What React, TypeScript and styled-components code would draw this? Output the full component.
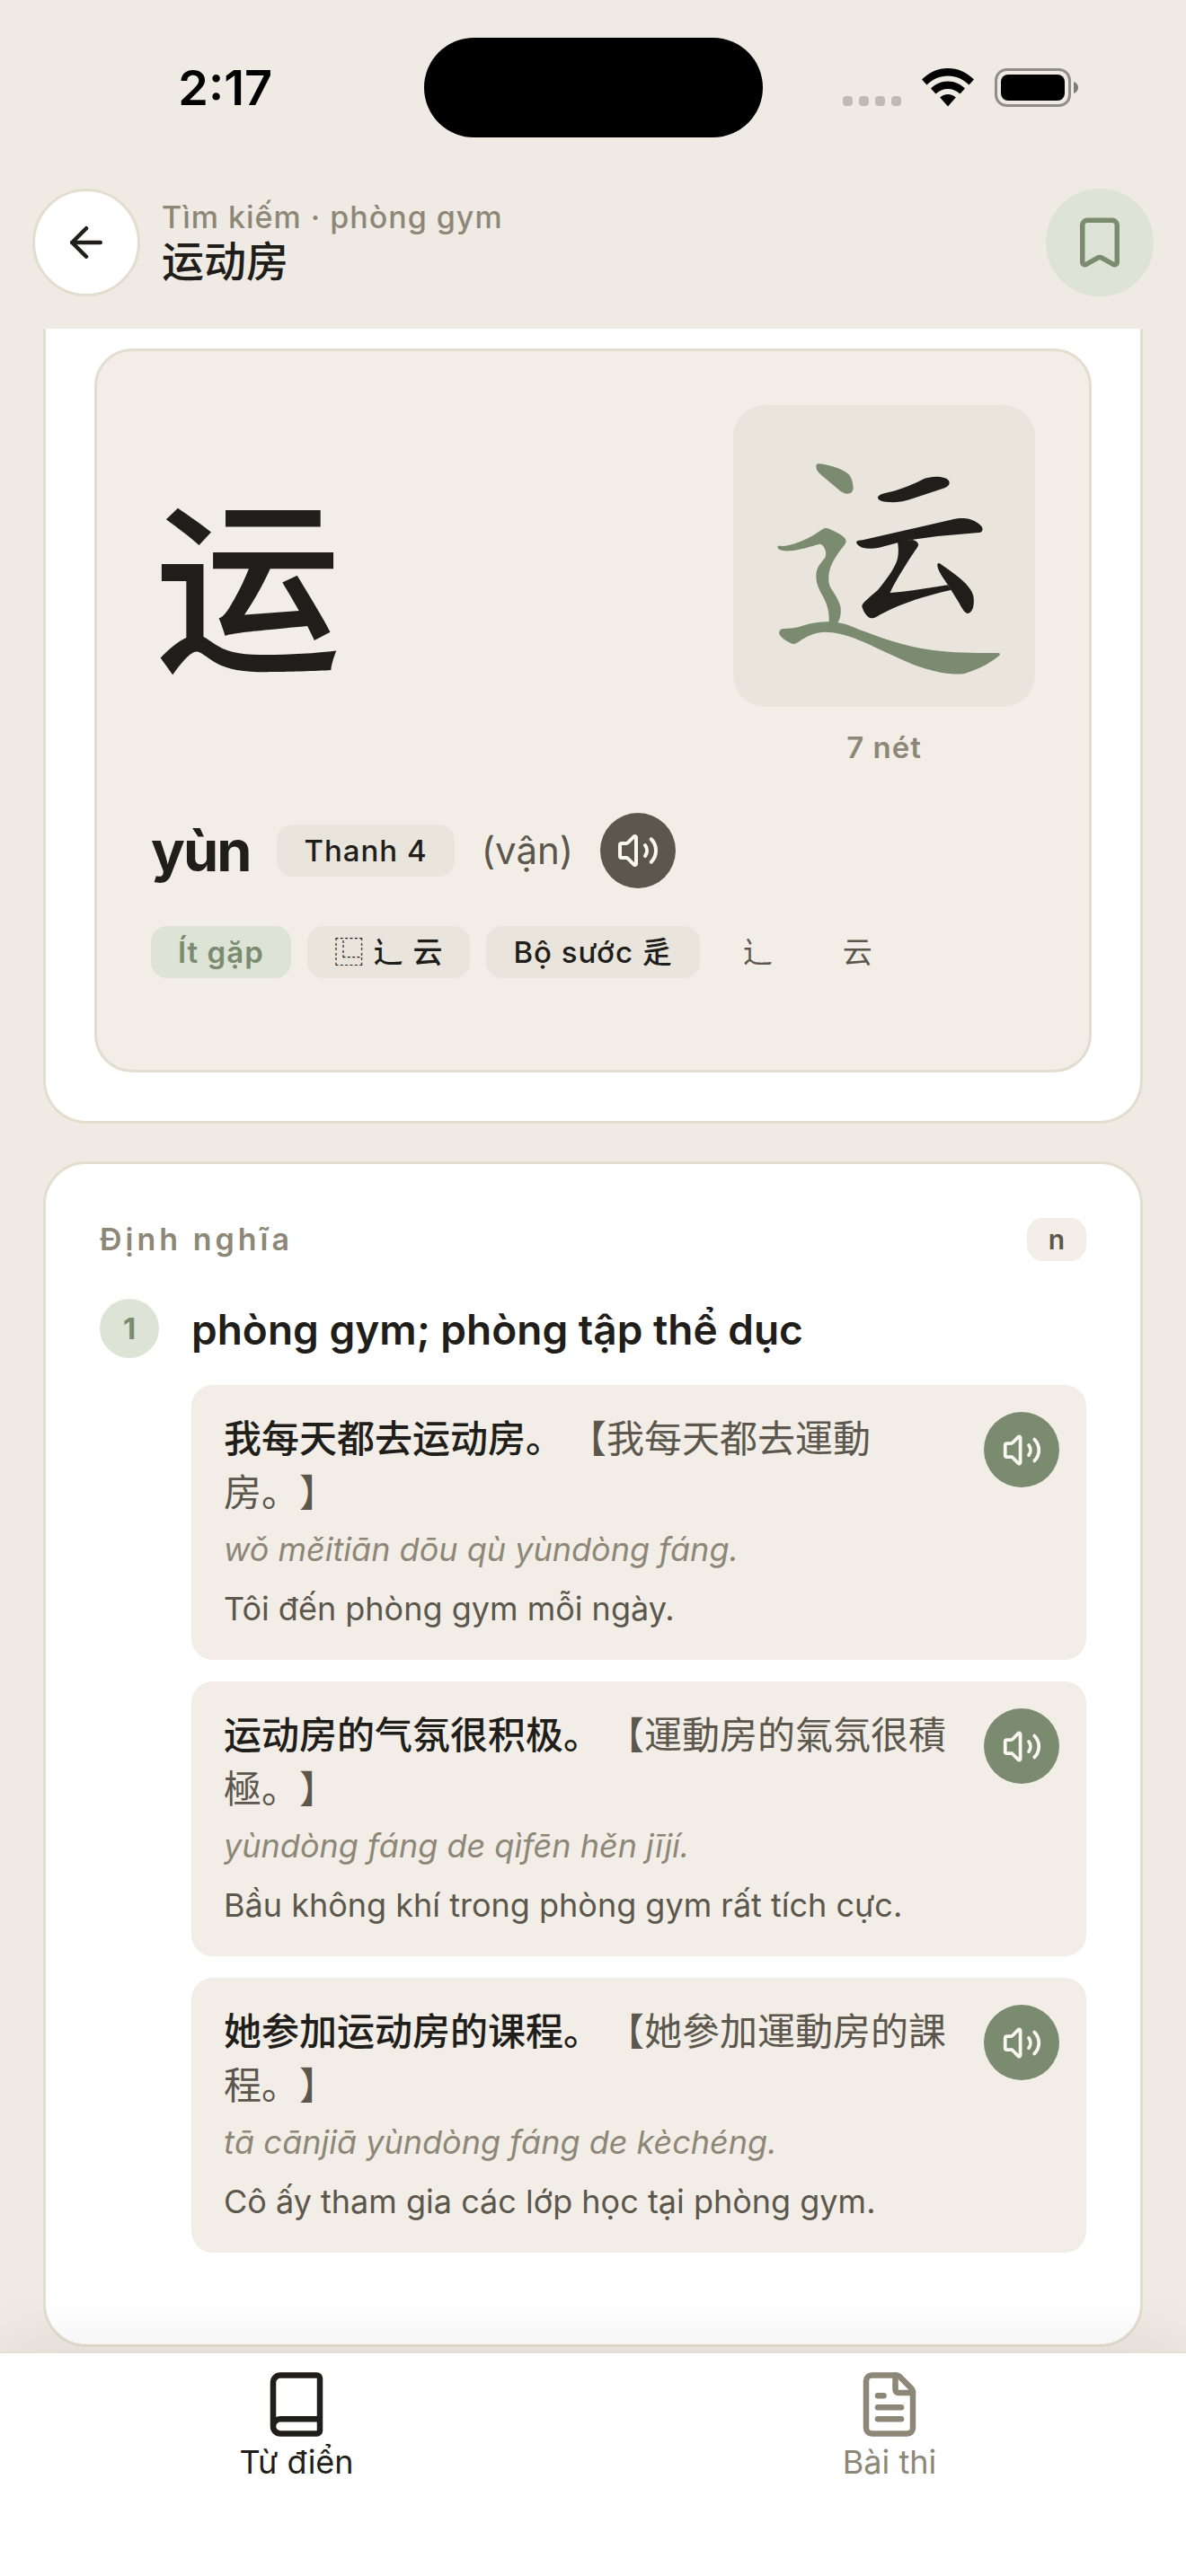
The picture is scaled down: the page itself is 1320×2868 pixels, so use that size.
import React from "react";
import styled, { createGlobalStyle } from "styled-components";
import { ArrowLeft, Book, FileText, Volume2 } from "lucide-react";

const color = {
  page: "#EFEAE3",
  surface: "#FFFFFF",
  soft: "#F2EDE6",
  chip: "#E9E4DC",
  line: "#E3DDD0",
  ink: "#1F1E1A",
  body: "#5B574D",
  muted: "#8D8778",
  sage: "#7B8B70",
  sageSoft: "#DDE3D5",
};

const GlobalStyle = createGlobalStyle`
  *, *::before, *::after { box-sizing: border-box; }
  body {
    margin: 0;
    background: ${color.page};
    color: ${color.ink};
    font-family: Inter, "Noto Sans CJK SC", sans-serif;
    text-spacing-trim: space-all;
  }
  h1, h2, h3, p, ol, ul { margin: 0; padding: 0; }
  ol, ul { list-style: none; }
`;

const Screen = styled.div`
  display: flex;
  flex-direction: column;
  min-height: 100vh;
`;

/* ---------- status bar ---------- */

const StatusBar = styled.div`
  display: grid;
  grid-template-columns: 1fr 377px 1fr;
  align-items: center;
  padding: 42px 0;
`;

const Clock = styled.time`
  padding-left: 30px;
  text-align: center;
  font-size: 54px;
  font-weight: 600;
  line-height: 60px;
  color: #000;
`;

const Island = styled.div`
  height: 111px;
  border-radius: 56px;
  background: #000;
`;

const StatusIcons = styled.div`
  display: flex;
  align-items: flex-end;
  justify-content: center;
  gap: 23px;
  padding-right: 30px;
`;

const Dots = styled.div`
  display: flex;
  gap: 7px;
  padding-bottom: 1px;
`;

const Dot = styled.span`
  width: 11px;
  height: 11px;
  border-radius: 4px;
  background: #bfbbb4;
`;

/* ---------- header ---------- */

const Header = styled.header`
  display: flex;
  align-items: center;
  gap: 24px;
  padding: 15px 36px 36px;
`;

const CircleButton = styled.button<{ $tone: "plain" | "sage" }>`
  display: grid;
  place-items: center;
  flex: none;
  width: 120px;
  height: 120px;
  padding: 0;
  border: 3px solid ${(p) => (p.$tone === "sage" ? color.sageSoft : color.line)};
  border-radius: 50%;
  background: ${(p) => (p.$tone === "sage" ? color.sageSoft : color.surface)};
  color: ${(p) => (p.$tone === "sage" ? color.sage : color.ink)};
`;

const Titles = styled.div`
  flex: 1;
  min-width: 0;
`;

const Crumb = styled.p`
  font-size: 34px;
  font-weight: 500;
  line-height: 42px;
  letter-spacing: 1px;
  color: ${color.muted};
`;

const Title = styled.h1`
  font-size: 47px;
  font-weight: 500;
  line-height: 56px;
`;

/* ---------- cards ---------- */

const Content = styled.main`
  display: flex;
  flex: 1;
  flex-direction: column;
  gap: 42px;
  padding: 0 48px 6px;
`;

const WordCard = styled.section`
  padding: 22px 54px 54px;
  border: 3px solid ${color.line};
  border-top: 0;
  border-radius: 0 0 48px 48px;
  background: ${color.surface};
`;

const CharacterPanel = styled.div`
  display: flex;
  flex-direction: column;
  padding: 60px 60px 102px;
  border: 3px solid ${color.line};
  border-radius: 42px;
  background: ${color.soft};
`;

const GlyphRow = styled.div`
  display: flex;
  align-items: center;
  justify-content: space-between;
`;

const Glyph = styled.h2`
  min-width: 216px;
  padding-top: 8px;
  font-size: 208px;
  font-weight: 500;
  line-height: 260px;
  text-align: center;
`;

const StrokeFigure = styled.figure`
  display: flex;
  flex-direction: column;
  align-items: center;
  gap: 24px;
  margin: 0;
`;

const StrokeBox = styled.div`
  width: 336px;
  height: 336px;
  border-radius: 36px;
  background: ${color.chip};
`;

const StrokeCount = styled.figcaption`
  font-size: 33px;
  font-weight: 600;
  line-height: 42px;
  letter-spacing: 1px;
  color: ${color.muted};
`;

const ReadingRow = styled.div`
  display: flex;
  align-items: center;
  gap: 30px;
  margin-top: 52px;
`;

const Pinyin = styled.strong`
  font-size: 63px;
  font-weight: 700;
  line-height: 72px;
  letter-spacing: -2px;
`;

const Reading = styled.span`
  font-size: 42px;
  line-height: 48px;
  color: ${color.body};
`;

const SoundButton = styled.button<{ $tone: "dark" | "sage" }>`
  display: grid;
  place-items: center;
  flex: none;
  width: 84px;
  height: 84px;
  padding: 0;
  border: 0;
  border-radius: 50%;
  background: ${(p) => (p.$tone === "dark" ? color.body : color.sage)};
  color: #faf7f2;
`;

const ChipRow = styled.ul`
  display: flex;
  flex-wrap: wrap;
  gap: 18px;
  margin-top: 42px;
`;

const Chip = styled.li<{ $tone?: "sage" | "clear" }>`
  padding: 8px 30px;
  border-radius: 18px;
  background: ${(p) =>
    p.$tone === "sage" ? color.sageSoft : p.$tone === "clear" ? "transparent" : color.chip};
  color: ${(p) =>
    p.$tone === "sage" ? color.sage : p.$tone === "clear" ? color.body : color.ink};
  font-size: 33px;
  font-weight: ${(p) => (p.$tone === "sage" ? 600 : p.$tone === "clear" ? 400 : 500)};
  line-height: 42px;
  letter-spacing: ${(p) => (p.$tone === "clear" ? "0" : "1px")};
`;

const ToneChip = styled(Chip).attrs({ as: "span" })``;

/* ---------- definitions ---------- */

const DefinitionCard = styled.section`
  padding: 60px 60px 102px;
  border: 3px solid ${color.line};
  border-radius: 48px;
  background: ${color.surface};
`;

const CardHead = styled.div`
  display: flex;
  align-items: center;
  justify-content: space-between;
`;

const CardLabel = styled.h2`
  font-size: 34px;
  font-weight: 600;
  line-height: 48px;
  letter-spacing: 4px;
  color: ${color.muted};
`;

const PartOfSpeech = styled.span`
  padding: 0 24px;
  border-radius: 18px;
  background: ${color.soft};
  color: ${color.body};
  font-size: 30px;
  font-weight: 600;
  line-height: 48px;
`;

const Sense = styled.li`
  display: grid;
  grid-template-columns: 66px minmax(0, 1fr);
  column-gap: 36px;
  margin-top: 42px;
`;

const SenseNumber = styled.span`
  width: 66px;
  height: 66px;
  border-radius: 50%;
  background: ${color.sageSoft};
  color: ${color.sage};
  font-size: 33px;
  font-weight: 700;
  line-height: 66px;
  text-align: center;
`;

const Meaning = styled.h3`
  padding-top: 2px;
  font-size: 46px;
  font-weight: 600;
  line-height: 64px;
`;

const Examples = styled.ul`
  display: flex;
  flex-direction: column;
  grid-column: 2;
  gap: 24px;
  margin-top: 30px;
`;

const Example = styled.li`
  display: flex;
  align-items: flex-start;
  gap: 30px;
  padding: 30px 30px 30px 36px;
  border-radius: 24px;
  background: ${color.soft};
`;

const ExampleText = styled.div`
  flex: 1;
  min-width: 0;
`;

const Sentence = styled.p`
  font-size: 42px;
  font-weight: 500;
  line-height: 60px;
`;

const Traditional = styled.span`
  margin-left: 6px;
  font-weight: 400;
  color: ${color.body};
`;

const Romanized = styled.p`
  margin-top: 6px;
  font-size: 36px;
  font-style: italic;
  line-height: 54px;
  color: ${color.muted};
`;

const Translation = styled.p`
  margin-top: 12px;
  font-size: 36px;
  line-height: 54px;
  color: ${color.body};
`;

/* ---------- tab bar ---------- */

const TabBar = styled.nav`
  z-index: 1;
  display: grid;
  grid-template-columns: 1fr 1fr;
  padding: 18px 0 102px;
  border-top: 1px solid ${color.line};
  background: ${color.surface};
  box-shadow: 0 -12px 60px rgba(31, 30, 26, 0.07);
`;

const Tab = styled.a<{ $active?: boolean }>`
  display: flex;
  flex-direction: column;
  align-items: center;
  color: ${(p) => (p.$active ? color.ink : color.muted)};
  font-size: 36px;
  line-height: 50px;
  text-decoration: none;
`;

/* ---------- drawings ---------- */

const WifiIcon = () => (
  <svg width="58" height="43" viewBox="0 0 58 43" fill="#000" aria-hidden="true">
    <path d="M29 0C18 0 8 4.500 0 12.500L5.500 18.500C12 12 20 8.500 29 8.500S46 12 52.500 18.500L58 12.500C50 4.500 40 0 29 0Z" />
    <path d="M29 14.500C21.500 14.500 15 17.500 10 22.500L15.500 28.500C19 25 24 23 29 23S39 25 42.500 28.500L48 22.500C43 17.500 36.500 14.500 29 14.500Z" />
    <path d="M29 29C25.500 29 22.500 30.300 20.200 32.600L29 42.500L37.800 32.600C35.500 30.300 32.500 29 29 29Z" />
  </svg>
);

const BatteryIcon = () => (
  <svg width="94" height="43" viewBox="0 0 94 43" aria-hidden="true">
    <rect x="1.500" y="1.500" width="82" height="40" rx="12" fill="none" stroke="#918E89" strokeWidth="3" />
    <rect x="7" y="7" width="71" height="29" rx="8" fill="#000" />
    <path d="M88 15C91 16 93 18.500 93 21.500S91 27 88 28Z" fill="#7E7B76" />
  </svg>
);

const BookmarkIcon = () => (
  <svg
    width="66"
    height="66"
    viewBox="0 0 24 24"
    fill="none"
    stroke="currentColor"
    strokeWidth="2"
    strokeLinecap="round"
    strokeLinejoin="round"
    aria-hidden="true"
  >
    <path d="M17 3a2 2 0 0 1 2 2v15a1 1 0 0 1-1.496.868l-4.512-2.578a2 2 0 0 0-1.984 0l-4.512 2.578A1 1 0 0 1 5 20V5a2 2 0 0 1 2-2z" />
  </svg>
);

const baseStrokes = [
  "M531 371C534 362 548 359 565 355C600 348 640 332 675 314C695 303 720 301 740 303C760 306 771 313 770 324C768 334 758 339 745 343L650 374C620 385 590 389 565 387C545 385 530 381 531 371Z",
  "M460 519C463 515 470 516 480 514L775 446C795 440 820 439 838 444C860 452 875 462 880 473C882 483 878 488 868 489L730 501L645 513L597 523L535 539C515 543 495 543 480 539C468 534 458 527 460 519Z",
  "M597 520L645 513C658 515 668 522 666 532C660 546 645 562 635 580C610 620 585 660 572 690C640 684 705 674 764 664L777 680C700 697 620 722 560 752C535 764 523 774 510 775C497 775 480 752 478 733C482 722 500 708 530 682C560 645 590 605 597 575C601 555 600 540 597 520Z",
  "M730 595C733 588 738 590 745 597C785 625 825 652 842 682C853 700 852 715 851 728C849 748 840 758 830 759C820 756 812 742 800 720L764 662C745 635 728 610 730 595Z",
];

const radicalStrokes = [
  "M326 262C330 256 345 259 365 264C400 272 425 284 437 298C446 312 448 328 449 342C447 355 438 360 428 359C412 357 404 348 392 338L345 299C330 287 322 276 326 262Z",
  "M196 537C198 532 205 534 215 534C245 532 290 514 325 492C345 478 352 473 360 474C375 478 400 490 415 502C426 511 428 520 420 530C405 548 385 574 374 602C364 630 365 655 373 672C385 692 400 712 406 735C410 758 405 780 396 792L368 790C369 760 366 740 352 710C340 686 325 665 325 635C325 605 340 592 352 577C360 565 359 552 352 539C346 530 340 525 334 528C310 534 270 548 235 550C212 551 198 547 196 537Z",
  "M203 818C206 808 215 810 230 809C255 808 275 802 300 794C330 786 370 784 400 790C430 795 450 806 480 817C540 840 620 868 700 880C770 890 840 892 934 891C940 892 940 897 935 901C900 930 860 948 820 960C770 966 720 955 650 930C580 902 520 868 450 841C420 830 390 821 355 821C325 822 300 832 278 846C265 855 255 863 245 860C230 855 215 845 206 834C200 827 201 822 203 818Z",
];

/* Brush-stroke diagram: the radical's strokes are tinted, the rest stay dark. */
const StrokeDiagram = () => (
  <svg width="336" height="336" viewBox="48 63 1008 1008" role="img" aria-label="运">
    {radicalStrokes.map((d) => (
      <path key={d} d={d} fill={color.sage} />
    ))}
    {baseStrokes.map((d) => (
      <path key={d} d={d} fill={color.ink} />
    ))}
  </svg>
);

/* ---------- data ---------- */

const examples = [
  {
    simplified: "我每天都去运动房。",
    traditional: "【我每天都去運動房。】",
    pinyin: "wǒ měitiān dōu qù yùndòng fáng.",
    translation: "Tôi đến phòng gym mỗi ngày.",
  },
  {
    simplified: "运动房的气氛很积极。",
    traditional: "【運動房的氣氛很積極。】",
    pinyin: "yùndòng fáng de qìfēn hěn jījí.",
    translation: "Bầu không khí trong phòng gym rất tích cực.",
  },
  {
    simplified: "她参加运动房的课程。",
    traditional: "【她參加運動房的課程。】",
    pinyin: "tā cānjiā yùndòng fáng de kèchéng.",
    translation: "Cô ấy tham gia các lớp học tại phòng gym.",
  },
];

export default function App() {
  return (
    <Screen>
      <GlobalStyle />
      <StatusBar>
        <Clock>2:17</Clock>
        <Island />
        <StatusIcons>
          <Dots>
            <Dot />
            <Dot />
            <Dot />
            <Dot />
          </Dots>
          <WifiIcon />
          <BatteryIcon />
        </StatusIcons>
      </StatusBar>

      <Header>
        <CircleButton $tone="plain" aria-label="Quay lại">
          <ArrowLeft size={54} />
        </CircleButton>
        <Titles>
          <Crumb>Tìm kiếm · phòng gym</Crumb>
          <Title>运动房</Title>
        </Titles>
        <CircleButton $tone="sage" aria-label="Lưu từ">
          <BookmarkIcon />
        </CircleButton>
      </Header>

      <Content>
        <WordCard>
          <CharacterPanel>
            <GlyphRow>
              <Glyph>运</Glyph>
              <StrokeFigure>
                <StrokeBox>
                  <StrokeDiagram />
                </StrokeBox>
                <StrokeCount>7 nét</StrokeCount>
              </StrokeFigure>
            </GlyphRow>
            <ReadingRow>
              <Pinyin>yùn</Pinyin>
              <ToneChip>Thanh 4</ToneChip>
              <Reading>(vận)</Reading>
              <SoundButton $tone="dark" aria-label="Nghe yùn">
                <Volume2 size={48} />
              </SoundButton>
            </ReadingRow>
            <ChipRow>
              <Chip $tone="sage">Ít gặp</Chip>
              <Chip>⿺ 辶 云</Chip>
              <Chip>Bộ sước 辵</Chip>
              <Chip $tone="clear">辶</Chip>
              <Chip $tone="clear">云</Chip>
            </ChipRow>
          </CharacterPanel>
        </WordCard>

        <DefinitionCard>
          <CardHead>
            <CardLabel>Định nghĩa</CardLabel>
            <PartOfSpeech>n</PartOfSpeech>
          </CardHead>
          <ol>
            <Sense>
              <SenseNumber>1</SenseNumber>
              <Meaning>phòng gym; phòng tập thể dục</Meaning>
              <Examples>
                {examples.map((e) => (
                  <Example key={e.simplified}>
                    <ExampleText>
                      <Sentence>
                        {e.simplified}
                        <Traditional>{e.traditional}</Traditional>
                      </Sentence>
                      <Romanized>{e.pinyin}</Romanized>
                      <Translation>{e.translation}</Translation>
                    </ExampleText>
                    <SoundButton $tone="sage" aria-label={`Nghe ${e.simplified}`}>
                      <Volume2 size={45} />
                    </SoundButton>
                  </Example>
                ))}
              </Examples>
            </Sense>
          </ol>
        </DefinitionCard>
      </Content>

      <TabBar>
        <Tab href="#dictionary" $active>
          <Book size={78} />
          Từ điển
        </Tab>
        <Tab href="#exams">
          <FileText size={78} />
          Bài thi
        </Tab>
      </TabBar>
    </Screen>
  );
}
